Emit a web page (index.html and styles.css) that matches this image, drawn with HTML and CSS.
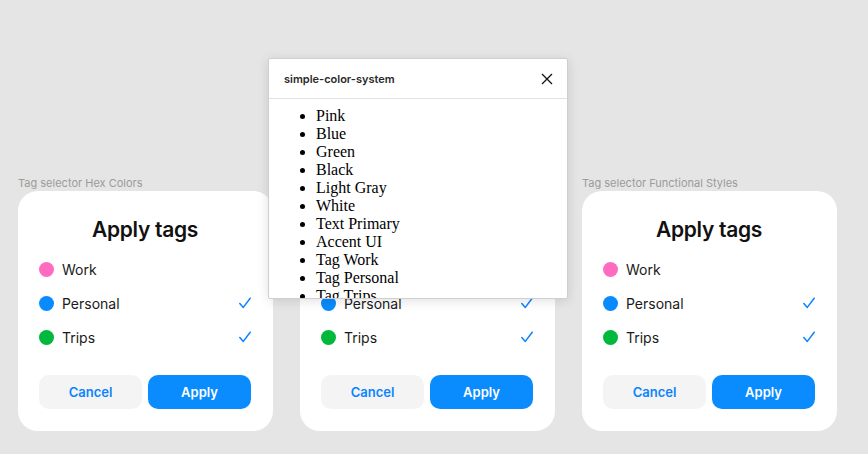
FILE: index.html
```html
<!DOCTYPE html>
<html>
<head>
<meta charset="utf-8">
<link rel="stylesheet" href="styles.css">
</head>
<body>
<div class="canvas">
  <section class="frame">
    <div class="frame-label">Tag selector Hex Colors</div>
    <div class="card">
      <h2 class="title">Apply tags</h2>
      <ul class="tags">
        <li class="tag"><span class="dot dot-work"></span><span class="name">Work</span></li>
        <li class="tag"><span class="dot dot-personal"></span><span class="name">Personal</span><svg class="check" viewBox="0 0 12 12"><path d="M0.8 6.6 L4.3 10.4 L11.2 1.2"/></svg></li>
        <li class="tag"><span class="dot dot-trips"></span><span class="name">Trips</span><svg class="check" viewBox="0 0 12 12"><path d="M0.8 6.6 L4.3 10.4 L11.2 1.2"/></svg></li>
      </ul>
      <div class="actions">
        <button class="btn btn-cancel">Cancel</button>
        <button class="btn btn-apply">Apply</button>
      </div>
    </div>
  </section>
  <section class="frame">
    <div class="frame-label">Tag selector Named Colors</div>
    <div class="card">
      <h2 class="title">Apply tags</h2>
      <ul class="tags">
        <li class="tag"><span class="dot dot-work"></span><span class="name">Work</span></li>
        <li class="tag"><span class="dot dot-personal"></span><span class="name">Personal</span><svg class="check" viewBox="0 0 12 12"><path d="M0.8 6.6 L4.3 10.4 L11.2 1.2"/></svg></li>
        <li class="tag"><span class="dot dot-trips"></span><span class="name">Trips</span><svg class="check" viewBox="0 0 12 12"><path d="M0.8 6.6 L4.3 10.4 L11.2 1.2"/></svg></li>
      </ul>
      <div class="actions">
        <button class="btn btn-cancel">Cancel</button>
        <button class="btn btn-apply">Apply</button>
      </div>
    </div>
  </section>
  <section class="frame">
    <div class="frame-label">Tag selector Functional Styles</div>
    <div class="card">
      <h2 class="title">Apply tags</h2>
      <ul class="tags">
        <li class="tag"><span class="dot dot-work"></span><span class="name">Work</span></li>
        <li class="tag"><span class="dot dot-personal"></span><span class="name">Personal</span><svg class="check" viewBox="0 0 12 12"><path d="M0.8 6.6 L4.3 10.4 L11.2 1.2"/></svg></li>
        <li class="tag"><span class="dot dot-trips"></span><span class="name">Trips</span><svg class="check" viewBox="0 0 12 12"><path d="M0.8 6.6 L4.3 10.4 L11.2 1.2"/></svg></li>
      </ul>
      <div class="actions">
        <button class="btn btn-cancel">Cancel</button>
        <button class="btn btn-apply">Apply</button>
      </div>
    </div>
  </section>

  <div class="modal">
    <div class="modal-header">
      <span class="modal-title">simple-color-system</span>
      <svg class="close" viewBox="0 0 12 12"><path d="M1 1 L11 11 M11 1 L1 11"/></svg>
    </div>
    <div class="modal-body">
      <ul class="color-list">
        <li>Pink</li>
        <li>Blue</li>
        <li>Green</li>
        <li>Black</li>
        <li>Light Gray</li>
        <li>White</li>
        <li>Text Primary</li>
        <li>Accent UI</li>
        <li>Tag Work</li>
        <li>Tag Personal</li>
        <li>Tag Trips</li>
      </ul>
    </div>
  </div>
</div>
</body>
</html>
```

FILE: styles.css
```css
html, body {
  margin: 0;
  padding: 0;
}
body {
  background: #e5e5e5;
  font-family: Inter, "Noto Sans", sans-serif;
  width: 868px;
  height: 454px;
  overflow: hidden;
}
.canvas {
  position: relative;
  display: flex;
  gap: 27px;
  padding: 176px 0 0 18px;
}
.frame {
  display: flex;
  flex-direction: column;
  gap: 1px;
}
.frame-label {
  font-size: 11px;
  line-height: 14px;
  color: #9b9b9b;
}
.card {
  width: 255px;
  height: 240px;
  box-sizing: border-box;
  background: #fff;
  border-radius: 20px;
  padding: 25px 22px 22px 21px;
  display: flex;
  flex-direction: column;
}
.title {
  margin: 0 0 8px;
  font-size: 21px;
  line-height: 28px;
  font-weight: 600;
  letter-spacing: -0.3px;
  text-align: center;
  color: #111;
}
.tags {
  list-style: none;
  margin: 0;
  padding: 0;
}
.tag {
  height: 34px;
  display: flex;
  align-items: center;
  gap: 8px;
  font-size: 14px;
  color: #1a1a1a;
}
.name {
  flex: 1;
}
.dot {
  width: 15px;
  height: 15px;
  border-radius: 50%;
  flex: none;
}
.dot-work { background: #ff6bc1; }
.dot-personal { background: #0a8aff; }
.dot-trips { background: #00b83b; }
.check {
  width: 12px;
  height: 12px;
  fill: none;
  stroke: #0a84ff;
  stroke-width: 1.5;
  stroke-linecap: round;
  stroke-linejoin: round;
}
.actions {
  margin-top: auto;
  display: flex;
  gap: 6px;
}
.btn {
  flex: 1;
  height: 34px;
  border: none;
  border-radius: 10px;
  font-family: Inter, "Noto Sans", sans-serif;
  font-size: 13px;
  font-weight: 600;
  cursor: pointer;
}
.btn-cancel {
  background: #f4f4f4;
  color: #0a84ff;
}
.btn-apply {
  background: #0a8cff;
  color: #fff;
}
.modal {
  position: absolute;
  left: 268px;
  top: 58px;
  width: 300px;
  height: 241px;
  box-sizing: border-box;
  background: #fff;
  border: 1px solid #cfcfcf;
  border-radius: 2px;
  box-shadow: 0 2px 12px rgba(0, 0, 0, 0.12);
  overflow: hidden;
  display: flex;
  flex-direction: column;
}
.modal-header {
  height: 40px;
  flex: none;
  box-sizing: border-box;
  border-bottom: 1px solid #e2e2e2;
  display: flex;
  align-items: center;
  justify-content: space-between;
  padding: 0 14px 0 15px;
}
.modal-title {
  font-size: 11px;
  font-weight: 600;
  color: #2a2a2a;
}
.close {
  width: 12px;
  height: 12px;
  fill: none;
  stroke: #111;
  stroke-width: 1.3;
}
.modal-body {
  flex: 1;
  overflow: hidden;
}
.color-list {
  margin: 0;
  padding: 8px 0 0 47px;
  font-family: "Liberation Serif", "Times New Roman", serif;
  font-size: 16px;
  line-height: 18px;
  color: #000;
}
```
